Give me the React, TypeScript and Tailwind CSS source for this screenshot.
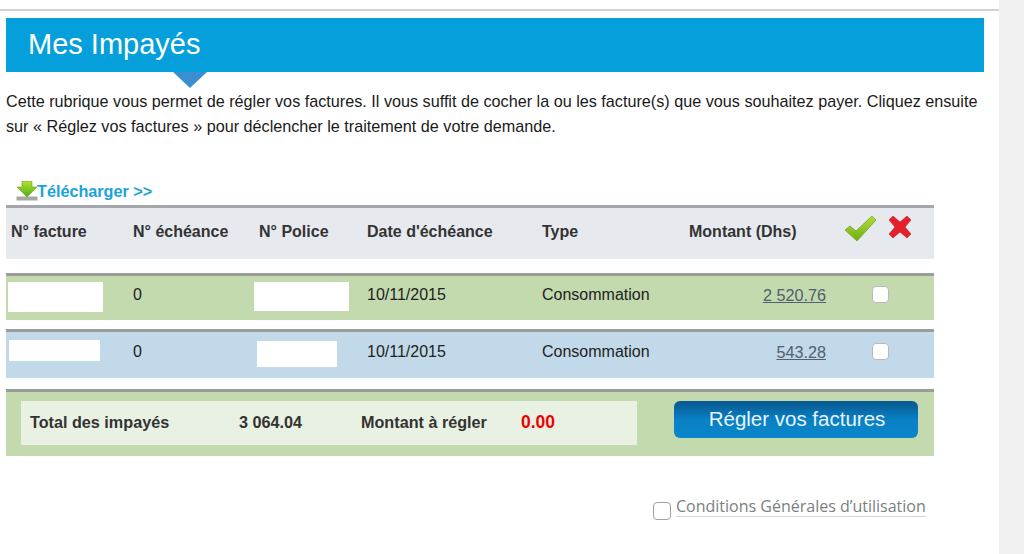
const sans = "font-['Liberation_Sans',Arial,sans-serif]";

function DownloadIcon() {
  return (
    <svg width="22" height="21" viewBox="0 0 22 21" className="shrink-0">
      <defs>
        <linearGradient id="dl" x1="0" y1="0" x2="0" y2="1">
          <stop offset="0" stopColor="#b4e02a" />
          <stop offset="1" stopColor="#4fae1c" />
        </linearGradient>
      </defs>
      <rect x="0.500" y="15.500" width="21" height="4" rx="0.5" fill="#a9a9a3" />
      <path d="M6 0.500h10v5.500h5l-10 10L1 6h5z" fill="url(#dl)" stroke="#5aa81e" strokeWidth="0.6" />
    </svg>
  );
}

function CheckIcon() {
  return (
    <svg width="33" height="28" viewBox="0 0 33 28">
      <defs>
        <linearGradient id="ck" x1="0" y1="0" x2="0" y2="1">
          <stop offset="0" stopColor="#b3dc3a" />
          <stop offset="1" stopColor="#6fae10" />
        </linearGradient>
      </defs>
      <path d="M1 15l5-4 6 5L28 1l4 4-19 21z" fill="url(#ck)" stroke="#7aa52a" strokeWidth="0.8" strokeLinejoin="round" />
    </svg>
  );
}

function CrossIcon() {
  return (
    <svg width="24" height="24" viewBox="0 0 24 24">
      <path d="M1 5l4-4 7 6 7-6 4 4-6 7 6 7-4 4-7-6-7 6-4-4 6-7z" fill="#e3202c" stroke="#c81f2a" strokeWidth="0.6" strokeLinejoin="round" />
    </svg>
  );
}

function Check() {
  return <span className="block w-[17px] h-[17px] -mt-[2px] rounded-[4px] bg-white border border-[#b9b9b9]" />;
}

const cols = "grid grid-cols-[127px_126px_108px_175px_147px_137px_108px] items-center";

function Row({
  bg,
  height,
  amount,
  box1,
  box2,
}: {
  bg: string;
  height: string;
  amount: string;
  box1: string;
  box2: string;
}) {
  return (
    <div className={`${cols} ${bg} ${height} pb-[6px] border-t-[3px] border-[#989d98] text-[16px] text-[#222]`}>
      <div className={box1} />
      <div>0</div>
      <div className={box2} />
      <div>10/11/2015</div>
      <div>Consommation</div>
      <div className="text-right">
        <a className="underline text-[#51606f] text-[16.2px]">{amount}</a>
      </div>
      <div className="pl-[46px]">
        <Check />
      </div>
    </div>
  );
}

export default function App() {
  return (
    <div className={`flex w-full h-[554px] overflow-hidden bg-white ${sans}`}>
      <main className="w-[999px] shrink-0 pt-[9px] border-r-0">
        <div className="h-[2px] bg-[#d2d2d2]" />
        <div className="ml-[6px] mt-[7px] w-[978px] h-[54px] bg-[#059fdb] pl-[22px] flex items-center text-white text-[29px]">
          Mes Impayés
        </div>
        <div className="ml-[173px] w-0 h-0 border-x-[17px] border-x-transparent border-t-[16px] border-t-[#3b8fd0]" />
        <p className="ml-[6px] w-[985px] mt-[1px] text-[16.2px] leading-[25px] text-[#1a1a1a]">
          Cette rubrique vous permet de régler vos factures. Il vous suffit de cocher la ou les facture(s) que vous souhaitez payer. Cliquez ensuite sur « Réglez vos factures » pour déclencher le traitement de votre demande.
        </p>
        <div className="ml-[16px] mt-[42px] h-[24px] flex items-start">
          <DownloadIcon />
          <span className="mt-[1px] -ml-[1px] text-[16.2px] leading-[18px] font-bold text-[#1aa3db]">Télécharger &gt;&gt;</span>
        </div>
        <div className="ml-[6px] w-[928px]">
          <div className={`${cols} h-[54px] pb-[4px] bg-[#e6e9ee] border-t-[3px] border-[#a3a6aa] text-[16px] font-bold text-[#333]`}>
            <div className="pl-[5px]">N° facture</div>
            <div>N° échéance</div>
            <div>N° Police</div>
            <div>Date d'échéance</div>
            <div>Type</div>
            <div>Montant (Dhs)</div>
            <div className="relative h-full">
              <span className="absolute left-[18px] top-[7px]"><CheckIcon /></span>
              <span className="absolute left-[62px] top-[7px]"><CrossIcon /></span>
            </div>
          </div>
          <div className="mt-[14px]">
            <Row
              bg="bg-[#c3d9ae]"
              height="h-[47px]"
              amount="2 520.76"
              box1="ml-[2px] mt-[4px] w-[95px] h-[30px] bg-white"
              box2="-ml-[5px] mt-[2px] w-[95px] h-[29px] bg-white"
            />
          </div>
          <div className="mt-[9px]">
            <Row
              bg="bg-[#c2d9e9]"
              height="h-[49px]"
              amount="543.28"
              box1="ml-[3px] -mt-[3px] w-[91px] h-[21px] bg-white"
              box2="-ml-[2px] mt-[4px] w-[80px] h-[26px] bg-white"
            />
          </div>
          <div className="mt-[11px] h-[67px] bg-[#c3d9ae] border-t-[3px] border-[#989d98] flex items-start pt-[9px] pl-[15px]">
            <div className="w-[616px] h-[44px] pb-[2px] bg-[#e9f1e3] flex items-center text-[16.2px] font-bold text-[#333]">
              <span className="ml-[9px] w-[209px]">Total des impayés</span>
              <span className="w-[122px]">3 064.04</span>
              <span className="w-[160px]">Montant à régler</span>
              <span className="text-[17.5px] text-[#f00000]">0.00</span>
            </div>
            <button className="ml-[37px] w-[244px] h-[37px] rounded-[6px] bg-gradient-to-b from-[#07588f] via-[#0a80c4] to-[#0a86ca] text-[#e8f3fa] text-[20.5px] flex items-center justify-center pl-[2px] pb-[1px]">
              Régler vos factures
            </button>
          </div>
        </div>
        <div className="mt-[41px] ml-[653px] flex items-start">
          <span className="mt-[5px] block w-[18px] h-[18px] rounded-[4px] bg-white border border-[#a0a0a0]" />
          <span className="ml-[5px] font-['Open_Sans',sans-serif] text-[16px] leading-[19px] text-[#7a7f80] border-b border-[#d5d8da]">
            Conditions Générales d’utilisation
          </span>
        </div>
      </main>
      <aside className="flex-1 bg-[#f0f0f0]" />
    </div>
  );
}
